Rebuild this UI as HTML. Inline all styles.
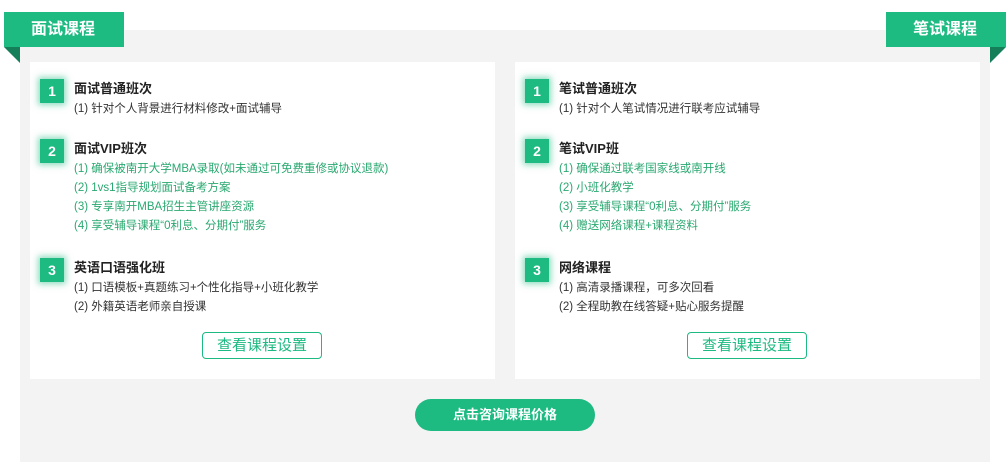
<!DOCTYPE html>
<html><head><meta charset="utf-8"><style>
*{margin:0;padding:0;box-sizing:border-box}
body{width:1006px;height:467px;background:#fff;position:relative;overflow:hidden;font-family:"Liberation Sans","Noto Sans CJK SC",sans-serif;color:#333}
.bg{position:absolute;left:20px;top:30px;width:970px;height:432px;background:#f3f3f3}
.tag{position:absolute;top:12px;width:120px;height:35px;background:#1dba82;color:#fff;font-weight:bold;font-size:16px;line-height:35px}
.card{position:absolute;top:62px;width:465px;height:317px;background:#fff}
.item{position:absolute;left:44px}
.badge{position:absolute;left:-34px;top:0;width:24px;height:24px;background:#1dba82;color:#fff;font-weight:bold;font-size:14px;text-align:center;line-height:24px;box-shadow:0 0 6px 2px rgba(29,186,130,.5)}
.t{font-size:13px;font-weight:bold;line-height:20px;margin-bottom:1px;color:#222}
.l{font-size:11.5px;line-height:19px;color:#333;white-space:nowrap}
.g{color:#2aa870}
.btn{position:absolute;left:172px;top:270px;width:120px;height:27px;border:1px solid #1dba82;border-radius:4px;color:#1dba82;font-size:15px;text-align:center;line-height:25px}
.cta{position:absolute;left:415px;top:399px;width:180px;height:32px;border-radius:16px;background:#1dba82;color:#fff;font-size:13px;font-weight:bold;text-align:center;line-height:32px}
</style></head><body>
<div class="bg"></div>
<div class="tag" style="left:4px;padding-left:27px">面试课程</div>
<div class="tag" style="left:886px;padding-left:27px">笔试课程</div>
<svg style="position:absolute;left:0;top:0" width="1006" height="70"><polygon points="4,47 20,47 20,63" fill="#157f5a"/><polygon points="990,47 1006,47 990,63" fill="#157f5a"/></svg>

<div class="card" style="left:30px">
 <div class="item" style="top:17px"><div class="badge">1</div><div class="t">面试普通班次</div><div class="l">(1) 针对个人背景进行材料修改+面试辅导</div></div>
 <div class="item" style="top:77px"><div class="badge">2</div><div class="t">面试VIP班次</div>
  <div class="l g">(1) 确保被南开大学MBA录取(如未通过可免费重修或协议退款)</div>
  <div class="l g">(2) 1vs1指导规划面试备考方案</div>
  <div class="l g">(3) 专享南开MBA招生主管讲座资源</div>
  <div class="l g">(4) 享受辅导课程“0利息、分期付”服务</div></div>
 <div class="item" style="top:196px"><div class="badge">3</div><div class="t">英语口语强化班</div>
  <div class="l">(1) 口语模板+真题练习+个性化指导+小班化教学</div>
  <div class="l">(2) 外籍英语老师亲自授课</div></div>
 <div class="btn">查看课程设置</div>
</div>

<div class="card" style="left:515px">
 <div class="item" style="top:17px"><div class="badge">1</div><div class="t">笔试普通班次</div><div class="l">(1) 针对个人笔试情况进行联考应试辅导</div></div>
 <div class="item" style="top:77px"><div class="badge">2</div><div class="t">笔试VIP班</div>
  <div class="l g">(1) 确保通过联考国家线或南开线</div>
  <div class="l g">(2) 小班化教学</div>
  <div class="l g">(3) 享受辅导课程“0利息、分期付”服务</div>
  <div class="l g">(4) 赠送网络课程+课程资料</div></div>
 <div class="item" style="top:196px"><div class="badge">3</div><div class="t">网络课程</div>
  <div class="l">(1) 高清录播课程，可多次回看</div>
  <div class="l">(2) 全程助教在线答疑+贴心服务提醒</div></div>
 <div class="btn">查看课程设置</div>
</div>

<div class="cta">点击咨询课程价格</div>
</body></html>
